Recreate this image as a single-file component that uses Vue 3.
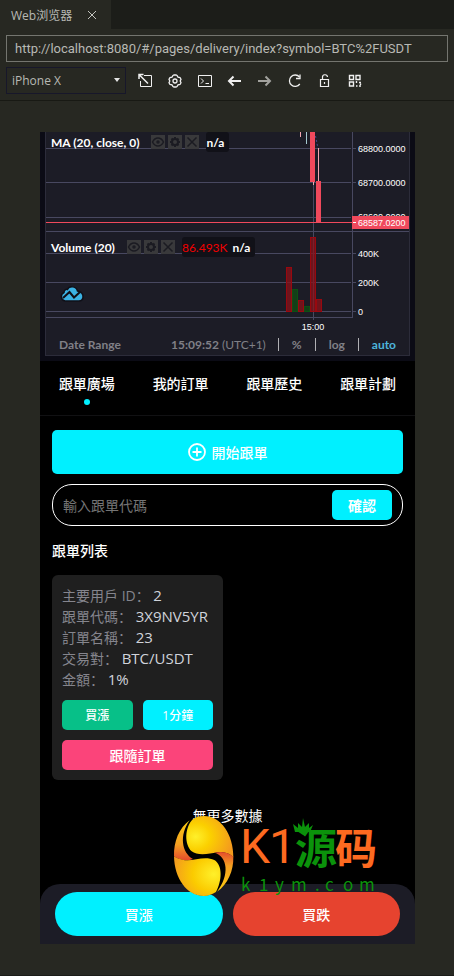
<script setup>
import { ref } from 'vue';

const address = ref('http://localhost:8080/#/pages/delivery/index?symbol=BTC%2FUSDT');
const device = ref('iPhone X');
const code = ref('');
const activeTab = ref(0);

const tabs = ['跟單廣場', '我的訂單', '跟單歷史', '跟單計劃'];

const order = [
  { label: '主要用戶 ID：', value: '2' },
  { label: '跟單代碼：', value: '3X9NV5YR' },
  { label: '訂單名稱：', value: '23' },
  { label: '交易對：', value: 'BTC/USDT' },
  { label: '金額：', value: '1%' }
];

const studies = [
  { name: 'MA (20, close, 0)', volume: '', pane: 'price' },
  { name: 'Volume (20)', volume: '86.493K', pane: 'volume' }
];

const gridRows = [16, 50, 85, 121, 150, 179];

const axisLabels = [
  { text: '68800.0000', y: 20 },
  { text: '68700.0000', y: 54 },
  { text: '68600.0000', y: 88 },
  { text: '400K', y: 125 },
  { text: '200K', y: 154 },
  { text: '0', y: 183 }
];

const volumes = [
  { x: 240, y: 135, up: false },
  { x: 246, y: 157, up: true },
  { x: 252, y: 168, up: false },
  { x: 258, y: 174, up: true },
  { x: 264, y: 105, up: false },
  { x: 270, y: 167, up: false }
];
</script>

<template>
  <div class="browser">
    <header>
      <div class="tab-strip">
        <div class="file-tab">
          <span>Web浏览器</span>
          <button class="close" aria-label="关闭">
            <svg width="10" height="10" viewBox="0 0 10 10"><path d="M1 1l8 8M9 1l-8 8" /></svg>
          </button>
        </div>
      </div>

      <div class="address-row">
        <input v-model="address" class="address" type="text" aria-label="地址" />
      </div>

      <div class="toolbar">
        <div class="device">
          <select v-model="device" aria-label="设备">
            <option>iPhone X</option>
          </select>
          <svg class="caret" width="6" height="4" viewBox="0 0 6 4"><path d="M0 0h6L3 4z" /></svg>
        </div>
        <button class="tool" aria-label="在浏览器中打开">
          <svg width="16" height="16" viewBox="0 0 16 16"><path d="M7 2.500h7.500v11h-11V8" /><path d="M2 1.500l9 9M2 6V1.500H6.500" stroke-width="1.500" /></svg>
        </button>
        <button class="tool" aria-label="设置">
          <svg width="16" height="16" viewBox="0 0 16 16"><path d="M6 2.500L7 2h2l1 .5 1 1.700 2 .3 1 1.700-.8 1.800.8 1.800-1 1.700-2 .3-1 1.700-1 .5H7l-1-.5-1-1.700-2-.3-1-1.700L2.800 8 2 6.200l1-1.700 2-.3z" stroke-width="1.300" /><circle cx="8" cy="8" r="2" stroke-width="1.300" /></svg>
        </button>
        <button class="tool" aria-label="控制台">
          <svg width="16" height="16" viewBox="0 0 16 16"><path d="M1.500 2.500h13v11h-13z" /><path d="M4 5.500L6.500 8 4 10.500M8.500 10.500H12" /></svg>
        </button>
        <button class="tool" aria-label="后退">
          <svg width="16" height="16" viewBox="0 0 16 16"><path d="M14 8H2M6.500 3.500L2 8l4.500 4.500" stroke-width="2" /></svg>
        </button>
        <button class="tool dim" aria-label="前进">
          <svg width="16" height="16" viewBox="0 0 16 16"><path d="M1 8h12M8.500 3.500L13 8l-4.500 4.500" stroke-width="2" /></svg>
        </button>
        <button class="tool" aria-label="刷新">
          <svg width="16" height="16" viewBox="0 0 16 16"><path d="M12.500 4A5.700 5.700 0 1 0 12.800 11" stroke-width="1.300" /><path d="M13 1.500V5.500H9" stroke-width="1.300" /></svg>
        </button>
        <button class="tool" aria-label="解锁">
          <svg width="16" height="16" viewBox="0 0 16 16"><path d="M3.500 6.500h8v7h-8zM5.500 6V4.500a2.500 2.500 0 0 1 5-.5M7.500 9v2" stroke-width="1.200" /></svg>
        </button>
        <button class="tool" aria-label="二维码">
          <svg width="16" height="16" viewBox="0 0 16 16"><path d="M2.500 2.500h4v4h-4zM9 2.500h4v4H9zM2.500 9h4v4h-4zM9.500 8v2M12 9.500h2M13.500 10.500v1.500M9 13h1.500M12 13h2" stroke-width="1.400" /></svg>
        </button>
      </div>
    </header>

    <main class="phone">
      <section class="chart-wrap">
        <div class="chart">
          <svg class="plot" viewBox="0 0 363 202">
            <rect v-for="y in gridRows" :key="y" class="grid" x="0" :y="y" width="305" height="1" />
            <rect v-for="y in gridRows" :key="'tick' + y" class="grid" x="307" :y="y" width="3" height="1" />
            <rect class="grid" x="267" y="0" width="1" height="188" />
            <rect class="grid" x="306" y="0" width="1" height="186" />
            <rect class="grid" x="0" y="99" width="363" height="1" />
            <rect class="grid" x="0" y="185" width="307" height="1" />

            <rect class="wick" x="254" y="0" width="1" height="5" />
            <rect class="wick-up" x="260" y="0" width="1" height="12" />
            <rect class="wick" x="267" y="50" width="1" height="3" />
            <rect class="wick" x="272" y="16" width="1" height="34" />
            <rect class="down" x="264" y="0" width="5" height="50" />
            <rect class="down" x="270" y="49" width="5" height="42" />
            <path class="average" d="M269.500 4l2 10" />

            <rect
              v-for="bar in volumes"
              :key="bar.x"
              :class="bar.up ? 'vol-up' : 'vol-down'"
              :x="bar.x + 0.5"
              :y="bar.y + 0.5"
              width="5"
              :height="179 - bar.y"
            />

            <text v-for="l in axisLabels" :key="l.text" class="axis" x="312" :y="l.y">{{ l.text }}</text>
            <text class="axis" x="267" y="198" text-anchor="middle">15:00</text>
            <rect class="down" x="0" y="90" width="306" height="1" />
            <rect class="down" x="306" y="84" width="57" height="13" />
            <rect class="mark" x="307" y="90" width="3" height="1" />
            <text class="axis" x="312" y="94">68587.0200</text>
          </svg>

          <div v-for="s in studies" :key="s.name" class="study" :class="s.pane">
            <span class="study-name">{{ s.name }}</span>
            <span class="study-tools">
              <button aria-label="Hide">
                <svg width="14" height="14" viewBox="0 0 14 14"><path d="M1.500 7C3 4 5 3 7 3s4 1 5.500 4C11 10 9 11 7 11s-4-1-5.500-4z" /><circle cx="7" cy="7" r="1" /></svg>
              </button>
              <button aria-label="Format">
                <svg width="14" height="14" viewBox="0 0 14 14"><circle cx="7" cy="7" r="3" stroke-width="2" /><path d="M7 2v2M7 10v2M2 7h2M10 7h2M3.500 3.500l1.200 1.200M9.300 9.300l1.200 1.200M3.500 10.500l1.200-1.200M9.300 4.700l1.200-1.200" stroke-width="2" /></svg>
              </button>
              <button aria-label="Delete">
                <svg width="14" height="14" viewBox="0 0 14 14"><path d="M2.500 2.500l9 9M11.500 2.500l-9 9" /></svg>
              </button>
            </span>
            <span class="study-values"><span v-if="s.volume" class="red">{{ s.volume }}</span><span>n/a</span></span>
          </div>

          <svg class="cloud" width="26" height="18" viewBox="0 0 26 18">
            <path d="M6 16a4.500 4.500 0 0 1-1-8.500C5 5 7 4 8.500 4.500 10 1 17 .5 18.500 6c4 .5 6 3.500 5.500 6.500-.5 2.500-2 3.500-4 3.500z" />
            <path class="trend" d="M4 13l6.500-6 4.500 5.500L21 7" />
          </svg>

          <div class="chart-footer">
            <span class="range">Date Range</span>
            <span class="clock">15:09:52 <span class="zone">(UTC+1)</span></span>
            <button class="scale">%</button>
            <button class="scale">log</button>
            <button class="scale auto">auto</button>
          </div>
        </div>
      </section>

      <nav class="tabs">
        <button
          v-for="(t, i) in tabs"
          :key="t"
          :class="{ active: activeTab === i }"
          @click="activeTab = i"
        >{{ t }}</button>
      </nav>

      <section class="content">
        <button class="start">
          <svg width="18" height="18" viewBox="0 0 18 18"><circle cx="9" cy="9" r="8" /><path d="M9 4.500v9M4.500 9h9" /></svg>
          開始跟單
        </button>

        <form class="code-form" @submit.prevent>
          <input v-model="code" type="text" placeholder="輸入跟單代碼" aria-label="輸入跟單代碼" />
          <button type="submit">確認</button>
        </form>

        <h2>跟單列表</h2>

        <div class="cards">
          <article class="card">
            <p v-for="row in order" :key="row.label">{{ row.label }} <span>{{ row.value }}</span></p>
            <div class="pair">
              <button class="buy">買漲</button>
              <button class="minute">1分鐘</button>
            </div>
            <button class="follow">跟隨訂單</button>
          </article>
        </div>

        <div class="end">
          <p>無更多數據</p>
          <svg class="watermark" width="206" height="86" viewBox="0 0 206 86">
            <defs>
              <radialGradient id="gold-top" cx="0.2" cy="0.5" r="0.8">
                <stop offset="0" stop-color="#fff02a" />
                <stop offset="0.4" stop-color="#fbd000" />
                <stop offset="1" stop-color="#f49a1e" />
              </radialGradient>
              <radialGradient id="gold-bottom" cx="0.85" cy="0.45" r="0.9">
                <stop offset="0" stop-color="#fff02a" />
                <stop offset="0.5" stop-color="#fbcb00" />
                <stop offset="1" stop-color="#f39a20" />
              </radialGradient>
              <linearGradient id="rim-left" x1="0" y1="0" x2="0" y2="1">
                <stop offset="0" stop-color="#fbcb10" />
                <stop offset="0.6" stop-color="#f5a021" />
                <stop offset="1" stop-color="#e54a2c" />
              </linearGradient>
              <linearGradient id="rim-right" x1="0" y1="0" x2="0" y2="1">
                <stop offset="0" stop-color="#e54a2c" />
                <stop offset="0.35" stop-color="#f5a021" />
                <stop offset="1" stop-color="#fbcb10" />
              </linearGradient>
            </defs>
            <g transform="translate(-7 -19) scale(0.3333)">
              <ellipse cx="116" cy="183" rx="88" ry="119" fill="#000" />
              <path fill="url(#rim-left)" d="M74 76C42 99 26 140 27 184C45 196 66 199 84 192C50 174 42 120 74 76z" />
              <path fill="url(#gold-top)" d="M84 72C58 98 58 148 80 169C96 183 134 177 155 172C178 169 196 177 205 187C206 120 168 63 117 63C104 63 93 67 84 72z" />
              <path fill="url(#gold-bottom)" d="M27 184C28 250 66 303 116 303C130 303 143 298 153 291C171 258 174 211 148 195C118 180 82 201 53 194C42 192 33 188 27 184z" />
              <path fill="url(#rim-right)" d="M148 173C188 184 195 239 156 290C189 268 206 226 205 185C191 171 170 168 148 173z" />
            </g>
            <text class="mark-latin" x="68 97" y="49">K1</text>
            <text class="mark-green" x="123" y="50">源</text>
            <text class="mark-orange" x="163" y="50">码</text>
            <path class="crown" d="M123 18l-2-8 5 4v-5l4 4 1-9 2 9 4-4v5l4-3-3 7z" />
            <text class="mark-url" x="69 87 103 119 143 153 171 187" y="77">k1ym.com</text>
          </svg>
        </div>
      </section>

      <footer class="trade-bar">
        <button class="long">買漲</button>
        <button class="short">買跌</button>
      </footer>
    </main>
  </div>
</template>

<style>
body {
  margin: 0;
  background: #272822;
}
</style>

<style scoped>
.browser {
  box-sizing: border-box;
  min-height: 100vh;
  display: flex;
  flex-direction: column;
  background: #272822;
  border-bottom: 1px solid #1b1c18;
  font-family: "Open Sans", "Noto Sans CJK SC", sans-serif;
  color: #fff;
}

button,
input,
select {
  font-family: inherit;
  margin: 0;
  padding: 0;
  border: none;
  background: none;
  color: inherit;
}

p,
h2 {
  margin: 0;
}

header {
  border-bottom: 1px solid #181914;
}

.tab-strip {
  display: flex;
  height: 29px;
  background: #1c1d19;
}

.file-tab {
  display: flex;
  align-items: center;
  gap: 14px;
  padding: 0 13px 0 11px;
  background: #272822;
  font-size: 12px;
  color: #b8b9b4;
}

.close {
  display: flex;
  padding: 1px;
}

.close svg {
  stroke: #c4c5c0;
}

.address-row {
  display: flex;
  padding: 6px 6px 5px;
}

.address {
  flex: 1;
  min-width: 0;
  height: 27px;
  box-sizing: border-box;
  padding: 0 8px;
  border: 1px solid #74756f;
  font-family: Roboto, "Open Sans", sans-serif;
  font-size: 13px;
  color: #b8b9b4;
}

.toolbar {
  display: flex;
  align-items: center;
  padding: 0 6px 6px;
}

.device {
  position: relative;
  width: 120px;
  margin-right: 4px;
}

.device select {
  display: block;
  width: 100%;
  height: 27px;
  box-sizing: border-box;
  appearance: none;
  padding: 0 5px;
  border: 1px solid #17172a;
  font-size: 12px;
  color: #b8b9b4;
}

.caret {
  position: absolute;
  right: 6px;
  top: 11px;
  fill: #e4e4e4;
  pointer-events: none;
}

.tool {
  display: flex;
  justify-content: center;
  width: 30px;
}

.tool svg {
  fill: none;
  stroke: #f0f0f0;
}

.tool.dim svg {
  stroke: #a2a29e;
}

.phone {
  flex: 1;
  display: flex;
  flex-direction: column;
  margin: 31px 39px 31px 40px;
  background: #000;
}

.chart-wrap {
  padding: 0 5px 5px;
  background: #0b0b15;
}

.chart {
  position: relative;
  border: 1px solid #2c2c3a;
  border-top: none;
  background: #1c1c26;
}

.plot {
  display: block;
  width: 100%;
}

.grid {
  fill: #484860;
}

.down {
  fill: #f0495c;
}

.wick {
  fill: #f3a5b0;
}

.wick-up {
  fill: #a5c9cf;
}

.average {
  stroke: #4a4690;
  stroke-dasharray: 2 2;
}

.vol-down {
  fill: #8b1119;
  fill-opacity: 0.75;
  stroke: #99080f;
}

.vol-up {
  fill: #124516;
  fill-opacity: 0.85;
  stroke: #0d5013;
}

.axis {
  fill: #fff;
  font-family: "Liberation Sans", sans-serif;
  font-size: 9px;
}

.mark {
  fill: #fff;
}

.study {
  position: absolute;
  left: 5px;
  display: flex;
  align-items: center;
  height: 20px;
  font-family: Lato, "Open Sans", sans-serif;
  font-size: 12px;
  font-weight: 700;
}

.study.price {
  top: 0;
}

.study.volume {
  top: 105px;
}

.study-tools {
  display: flex;
  gap: 3px;
  margin: 0 7px 0 12px;
}

.study-tools button {
  display: flex;
  background: #39393b;
}

.study-tools svg {
  fill: none;
  stroke: #1b1b22;
  stroke-width: 1.5;
}

.study-values {
  display: flex;
  gap: 5px;
  align-items: center;
  height: 20px;
  padding-right: 5px;
  border-radius: 3px;
  background: #111118;
}

.red {
  color: #f00000;
  font-weight: 400;
}

.cloud {
  position: absolute;
  left: 13px;
  top: 153px;
  fill: #3bb3e4;
  stroke: #101018;
  stroke-width: 1.5;
}

.cloud .trend {
  fill: none;
  stroke-width: 2;
}

.chart-footer {
  display: flex;
  align-items: center;
  height: 21px;
  padding-left: 13px;
  font-family: Lato, "Open Sans", sans-serif;
  font-size: 12px;
  font-weight: 700;
  color: #808087;
}

.clock {
  margin-left: auto;
  padding-right: 12px;
}

.zone {
  font-weight: 400;
}

.scale {
  padding: 0 13px;
  border-left: 1px solid #b0b0b4;
  font-size: 12px;
  font-weight: 700;
  line-height: 13px;
}

.scale.auto {
  color: #4db5dc;
}

.tabs {
  display: flex;
  border-bottom: 1px solid #111113;
}

.tabs button {
  position: relative;
  flex: 1;
  height: 54px;
  padding-bottom: 10px;
  font-size: 14px;
  font-weight: 500;
}

.tabs .active::after {
  content: "";
  position: absolute;
  left: 50%;
  bottom: 10px;
  width: 6px;
  height: 6px;
  margin-left: -3px;
  border-radius: 50%;
  background: #00f0ff;
}

.content {
  flex: 1;
  padding: 14px 12px 0;
}

.start {
  display: flex;
  align-items: center;
  justify-content: center;
  gap: 6px;
  width: 100%;
  height: 44px;
  border-radius: 5px;
  background: #00f0ff;
  font-size: 14px;
  font-weight: 500;
}

.start svg {
  fill: none;
  stroke: #fff;
  stroke-width: 1.8;
}

.code-form {
  display: flex;
  align-items: center;
  margin-top: 10px;
  height: 40px;
  padding: 0 10px;
  border: 1px solid #fff;
  border-radius: 20px;
}

.code-form input {
  flex: 1;
  min-width: 0;
  font-size: 14px;
}

.code-form input::placeholder {
  color: #757575;
}

.code-form button {
  width: 60px;
  height: 30px;
  border-radius: 5px;
  background: #00f0ff;
  font-size: 14px;
  font-weight: 700;
}

h2 {
  margin: 14px 0;
  font-size: 14px;
  font-weight: 500;
  line-height: 21px;
}

.cards {
  display: grid;
  grid-template-columns: 1fr 1fr;
  gap: 9px;
}

.card {
  padding: 10px;
  border-radius: 6px;
  background: #1f1f1f;
}

.card p {
  font-size: 14px;
  line-height: 21px;
  color: #85858d;
}

.card p span {
  font-size: 15px;
  color: #d0d3da;
}

.pair {
  display: grid;
  grid-template-columns: 1fr 1fr;
  gap: 10px;
  margin: 10px 0;
}

.card button {
  height: 30px;
  border-radius: 5px;
  font-size: 12px;
  font-weight: 500;
}

.card .buy {
  background: #07c088;
}

.card .minute {
  background: #00f0ff;
}

.card .follow {
  width: 100%;
  background: #fb447a;
  font-size: 14px;
}

.end {
  position: relative;
  margin-top: 25px;
  text-align: center;
  font-size: 14px;
  line-height: 21px;
}

.watermark {
  position: absolute;
  left: 120px;
  top: 9px;
  z-index: 2;
}

.mark-latin {
  fill: #fd6a20;
  font-family: Roboto, sans-serif;
  font-size: 48px;
}

.mark-green,
.mark-orange {
  font-family: "Noto Sans CJK SC", sans-serif;
  font-size: 42px;
  font-weight: 700;
}

.mark-green {
  fill: #0b920b;
}

.mark-orange {
  fill: #fd6a20;
}

.crown {
  fill: #0b920b;
}

.mark-url {
  fill: #0b920b;
  font-family: "Noto Sans CJK SC", sans-serif;
  font-size: 17px;
}

.trade-bar {
  display: flex;
  gap: 10px;
  padding: 8px 15px;
  border-radius: 20px 20px 0 0;
  background: #1c1c26;
}

.trade-bar button {
  flex: 1;
  height: 44px;
  border-radius: 22px;
  font-size: 14px;
  font-weight: 500;
}

.long {
  background: #00f0ff;
}

.short {
  background: #e6432f;
}
</style>
